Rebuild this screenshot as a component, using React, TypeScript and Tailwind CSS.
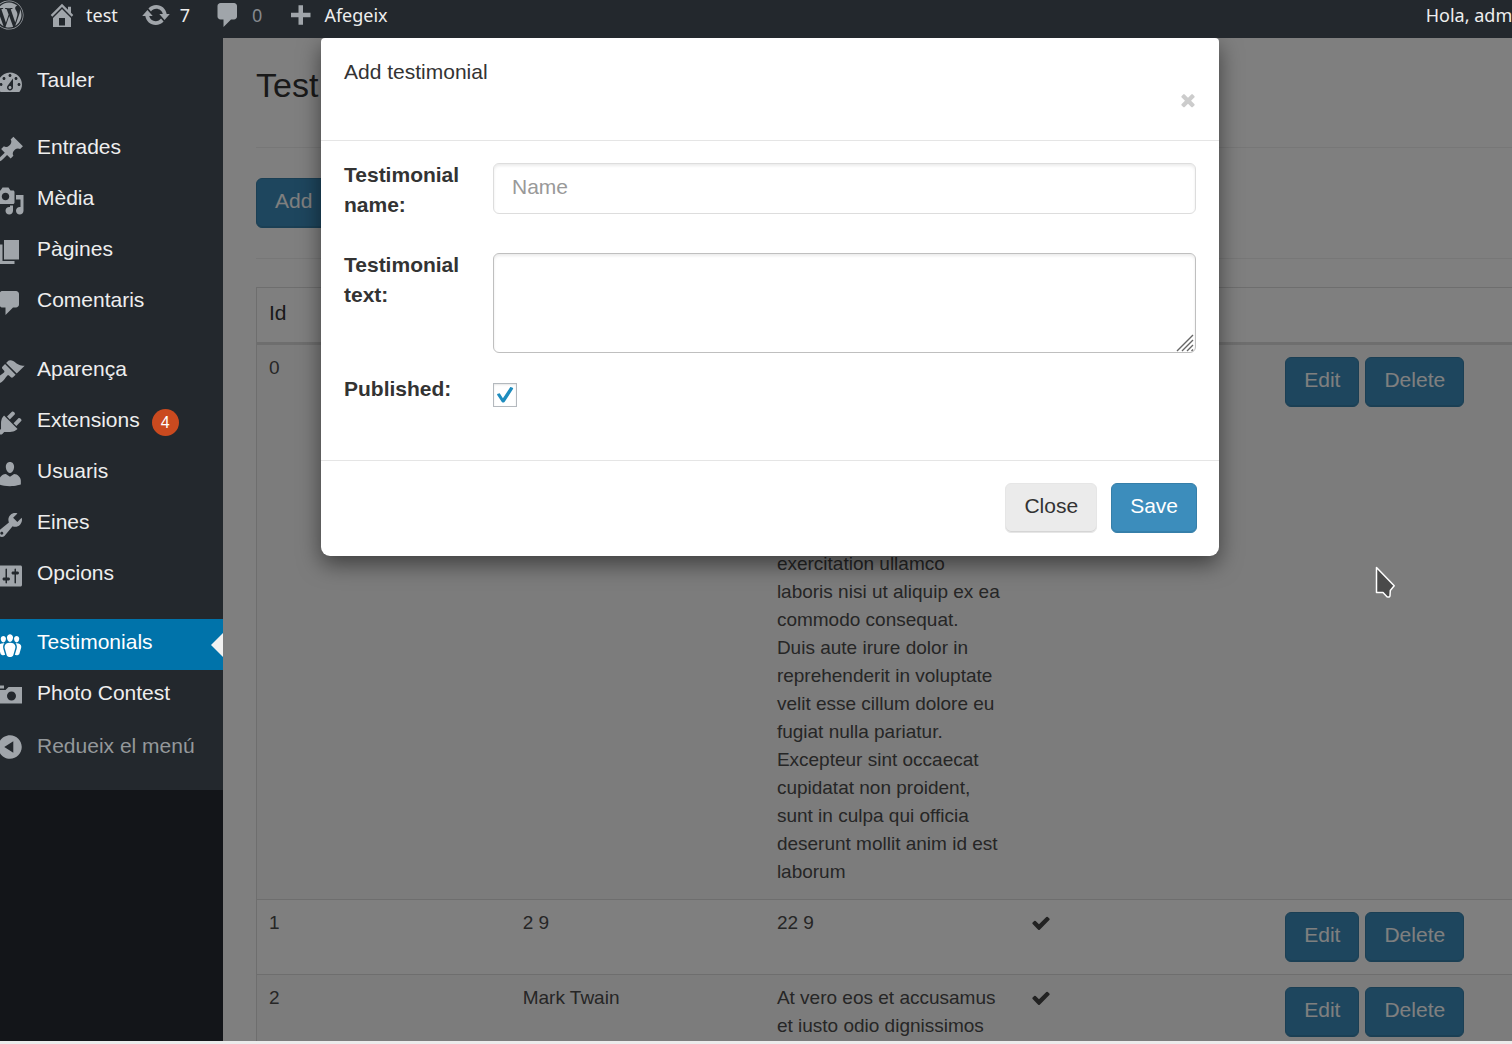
import { useState } from 'react'
import { FaWordpress } from 'react-icons/fa'
import clsx from 'clsx'

interface MenuEntry {
  label: string
  icon: string
  badge?: number
}

interface Testimonial {
  id: number
  name: string
  text: string
  published: boolean
}

// 20x20 admin glyphs
const icons = {
  home: 'M16 8.5l1.53 1.53-1.06 1.06L10 4.6l-6.47 6.49-1.06-1.06L10 2.5l4 4v-2h2v4zm-6-2.46l6 5.99V18H4v-5.97zM12 17v-5H8v5h4z',
  update:
    'M10.2 3.28c3.53 0 6.43 2.61 6.92 6h2.08l-3.5 4-3.5-4h2.32c-.45-1.97-2.21-3.45-4.32-3.45-1.45 0-2.73.71-3.54 1.78L4.95 5.66C6.23 4.2 8.11 3.28 10.2 3.28zm-.4 13.44c-3.52 0-6.43-2.61-6.92-6H.8l3.5-4c1.17 1.33 2.33 2.67 3.5 4H5.48c.45 1.97 2.21 3.45 4.32 3.45 1.45 0 2.73-.71 3.54-1.78l1.71 1.95c-1.28 1.46-3.15 2.38-5.25 2.38z',
  comments: 'M5 2h9c1.1 0 2 .9 2 2v7c0 1.1-.9 2-2 2h-2l-5 5v-5H5c-1.1 0-2-.9-2-2V4c0-1.1.9-2 2-2z',
  plus: 'M17 8.5v3h-5v5H9v-5H4v-3h5v-5h3v5h5z',
  dashboard:
    'M3.76 16h12.48c1.1-1.37 1.76-3.11 1.76-5 0-4.42-3.58-8-8-8s-8 3.58-8 8c0 1.89.66 3.63 1.76 5zM10 4c.55 0 1 .45 1 1s-.45 1-1 1-1-.45-1-1 .45-1 1-1zM6 6c.55 0 1 .45 1 1s-.45 1-1 1-1-.45-1-1 .45-1 1-1zm8 0c.55 0 1 .45 1 1s-.45 1-1 1-1-.45-1-1 .45-1 1-1zm-5.37 5.55L12 7v6c0 1.1-.9 2-2 2s-2-.9-2-2c0-.57.24-1.08.63-1.45zM4 10c.55 0 1 .45 1 1s-.45 1-1 1-1-.45-1-1 .45-1 1-1zm12 0c.55 0 1 .45 1 1s-.45 1-1 1-1-.45-1-1 .45-1 1-1zm-5 3c0-.55-.45-1-1-1s-1 .45-1 1 .45 1 1 1 1-.45 1-1z',
  post: 'M10.44 3.02l1.82-1.82 6.36 6.35-1.83 1.82c-1.05-.68-2.48-.57-3.41.36l-.75.75c-.92.93-1.04 2.35-.35 3.41l-1.83 1.82-2.41-2.41-2.8 2.79c-.42.42-3.38 2.71-3.8 2.29s1.86-3.39 2.28-3.81l2.79-2.79L4.1 9.36l1.83-1.82c1.05.69 2.48.57 3.4-.36l.75-.75c.93-.92 1.05-2.35.36-3.41z',
  media:
    'M13 11V4c0-.55-.45-1-1-1h-1.67L9 1H5L3.67 3H2c-.55 0-1 .45-1 1v7c0 .55.45 1 1 1h10c.55 0 1-.45 1-1zM7 4.5c1.38 0 2.5 1.12 2.5 2.5S8.38 9.5 7 9.5 4.5 8.38 4.5 7 5.62 4.5 7 4.5zM14 6h5v10.5c0 1.38-1.12 2.5-2.5 2.5S14 17.88 14 16.5s1.12-2.5 2.5-2.5c.17 0 .34.02.5.05V9h-3V6zm-4 8.05V13h2v3.5c0 1.38-1.12 2.5-2.5 2.5S7 17.88 7 16.5 8.12 14 9.5 14c.17 0 .34.02.5.05z',
  page: 'M6 15V2h10v13H6zm-1 1h8v2H3V5h2v11z',
  appearance:
    'M14.48 11.06L7.41 3.99l1.5-1.5c.5-.56 2.3-.47 3.51.32 1.21.8 1.43 1.28 2.91 2.1 1.18.64 2.45 1.26 4.45.85zm-.71.71L6.7 4.7 4.93 6.47c-.39.39-.39 1.02 0 1.41l1.06 1.06c.39.39.39 1.03 0 1.42-.6.6-1.43 1.11-2.21 1.69-.35.26-.7.53-1.01.84C1.43 14.23.4 16.08 1.4 17.07c.99 1 2.84-.03 4.18-1.36.31-.31.58-.66.85-1.02.57-.78 1.08-1.61 1.69-2.21.39-.39 1.02-.39 1.41 0l1.06 1.06c.39.39 1.02.39 1.41 0z',
  plugins:
    'M13.11 4.36L9.87 7.6 8 5.73l3.24-3.24c.35-.34 1.05-.2 1.56.32.52.51.66 1.21.31 1.55zm-8 1.77l.91-1.12 9.01 9.01-1.19.84c-.71.71-2.63 1.16-3.82 1.16H6.14L4.9 17.26c-.59.59-1.54.59-2.12 0-.59-.58-.59-1.53 0-2.12l1.24-1.24v-3.88c0-1.13.4-3.19 1.09-3.89zm7.26 3.97l3.24-3.24c.34-.35 1.04-.21 1.55.31.52.51.66 1.21.31 1.55l-3.24 3.25z',
  users:
    'M10 9.25c-2.27 0-2.73-3.44-2.73-3.44C7 4.02 7.82 2 9.97 2c2.16 0 2.98 2.02 2.71 3.81 0 0-.41 3.44-2.68 3.44zm0 2.57L12.72 10c2.39 0 4.52 2.33 4.52 4.53v2.49s-3.65 1.13-7.24 1.13c-3.65 0-7.24-1.13-7.24-1.13v-2.49c0-2.25 1.94-4.48 4.47-4.48z',
  tools:
    'M16.68 9.77c-1.34 1.34-3.3 1.67-4.95.99l-5.41 6.52c-.99.99-2.59.99-3.58 0s-.99-2.59 0-3.57l6.52-5.42c-.68-1.65-.35-3.61.99-4.95 1.28-1.28 3.12-1.62 4.72-1.06l-2.89 2.89 2.82 2.82 2.86-2.87c.53 1.58.18 3.39-1.08 4.65zM3.81 16.21c.4.39 1.04.39 1.43 0 .4-.4.4-1.04 0-1.43-.39-.4-1.03-.4-1.43 0-.39.39-.39 1.03 0 1.43z',
  settings:
    'M18 16V4c0-.55-.45-1-1-1H3c-.55 0-1 .45-1 1v12c0 .55.45 1 1 1h14c.55 0 1-.45 1-1zM8 11h1c.55 0 1 .45 1 1s-.45 1-1 1H8v1.5c0 .28-.22.5-.5.5s-.5-.22-.5-.5V13H6c-.55 0-1-.45-1-1s.45-1 1-1h1V5.5c0-.28.22-.5.5-.5s.5.22.5.5V11zm5-2h-1c-.55 0-1-.45-1-1s.45-1 1-1h1V5.5c0-.28.22-.5.5-.5s.5.22.5.5V7h1c.55 0 1 .45 1 1s-.45 1-1 1h-1v5.5c0 .28-.22.5-.5.5s-.5-.22-.5-.5V9z',
  groups:
    'M8.03 4.46c-.29 1.28.55 3.46 1.97 3.46 1.41 0 2.25-2.18 1.96-3.46-.22-.98-1.08-1.63-1.96-1.63-.89 0-1.74.65-1.97 1.63zm-4.13.9c-.25 1.08.47 2.93 1.67 2.93s1.92-1.85 1.67-2.93c-.19-.83-.92-1.39-1.67-1.39s-1.48.56-1.67 1.39zm8.86 0c-.25 1.08.47 2.93 1.66 2.93 1.2 0 1.92-1.85 1.67-2.93-.19-.83-.92-1.39-1.67-1.39-.74 0-1.47.56-1.66 1.39zm-.59 11.43l1.25-4.3C14.2 10 12.71 8.47 10 8.47c-2.72 0-4.21 1.53-3.44 4.02l1.26 4.3C8.05 17.51 9 18 10 18c.98 0 1.94-.49 2.17-1.21zm-6.1-7.63c-.49.67-.96 1.83-.42 3.59l1.12 3.79c-.34.2-.77.31-1.2.31-.85 0-1.65-.41-1.85-1.03l-1.07-3.65c-.65-2.11.61-3.4 2.92-3.4.27 0 .54.02.79.06-.1.1-.2.22-.29.33zm8.35-.39c2.31 0 3.58 1.29 2.92 3.4l-1.07 3.65c-.2.62-1 1.03-1.85 1.03-.43 0-.86-.11-1.2-.31l1.11-3.77c.55-1.78.08-2.94-.42-3.61-.08-.11-.18-.23-.28-.33.25-.04.51-.06.79-.06z',
  camera: 'M6 5V3H3v2h3zm12 10V4H9L7 6H2v9h16zm-7-8c1.66 0 3 1.34 3 3s-1.34 3-3 3-3-1.34-3-3 1.34-3 3-3z',
  collapse:
    'M10 2.16c4.33 0 7.84 3.51 7.84 7.84s-3.51 7.84-7.84 7.84S2.16 14.33 2.16 10 5.67 2.16 10 2.16zm2.2 11.72V6.12L6.18 10z',
}

const CHECK =
  'M1671 566q0 40-28 68l-724 724-136 136q-28 28-68 28t-68-28l-136-136-362-362q-28-28-28-68t28-68l136-136q28-28 68-28t68 28l294 295 656-657q28-28 68-28t68 28l136 136q28 28 28 68z'
const TIMES =
  'M1490 1322q0 40-28 68l-136 136q-28 28-68 28t-68-28l-294-294-294 294q-28 28-68 28t-68-28l-136-136q-28-28-28-68t28-68l294-294-294-294q-28-28-28-68t28-68l136-136q28-28 68-28t68 28l294 294 294-294q28-28 68-28t68 28l136 136q28 28 28 68t-28 68l-294 294 294 294q28 28 28 68z'

const menuGroups: MenuEntry[][] = [
  [{ label: 'Tauler', icon: icons.dashboard }],
  [
    { label: 'Entrades', icon: icons.post },
    { label: 'Mèdia', icon: icons.media },
    { label: 'Pàgines', icon: icons.page },
    { label: 'Comentaris', icon: icons.comments },
  ],
  [
    { label: 'Aparença', icon: icons.appearance },
    { label: 'Extensions', icon: icons.plugins, badge: 4 },
    { label: 'Usuaris', icon: icons.users },
    { label: 'Eines', icon: icons.tools },
    { label: 'Opcions', icon: icons.settings },
  ],
  [
    { label: 'Testimonials', icon: icons.groups },
    { label: 'Photo Contest', icon: icons.camera },
  ],
]

const testimonials: Testimonial[] = [
  {
    id: 0,
    name: 'Lorem',
    text: 'Lorem ipsum dolor sit amet, consectetur adipiscing elit, sed do eiusmod tempor incididunt ut labore et dolore magna aliqua. Ut enim ad minim veniam, quis nostrud exercitation ullamco laboris nisi ut aliquip ex ea commodo consequat. Duis aute irure dolor in reprehenderit in voluptate velit esse cillum dolore eu fugiat nulla pariatur. Excepteur sint occaecat cupidatat non proident, sunt in culpa qui officia deserunt mollit anim id est laborum',
    published: true,
  },
  { id: 1, name: '2 9', text: '22 9', published: true },
  { id: 2, name: 'Mark Twain', text: 'At vero eos et accusamus et iusto odio dignissimos', published: true },
]

export default function App() {
  return (
    <div className="flex h-screen flex-col overflow-hidden border-b-[3px] border-[#ebebeb] bg-white font-['Liberation_Sans',Arial,sans-serif] text-[21px]">
      <AdminBar />
      <div className="relative flex min-h-0 flex-1 overflow-hidden">
        <Sidebar />
        <main className="relative min-w-0 flex-1 overflow-hidden bg-white pl-[33px]">
          <TestimonialsPage />
          <div className="absolute inset-0 bg-black/50" />
        </main>
        {/* Dialog layer */}
        <div className="pointer-events-none absolute inset-y-0 left-0 -right-7 flex items-start justify-center">
          <AddTestimonialDialog />
        </div>
      </div>
      <svg className="absolute top-[563px] left-[1372px] h-[38px] w-7" viewBox="0 0 28 38" aria-hidden="true">
        <path
          d="M4.500 4.500v25H11l4 4.200q2.800 1 3-1l.3-5.200 3.900-4.800z"
          fill="#4a4a4a"
          stroke="#fff"
          strokeWidth="1.500"
          strokeLinejoin="round"
        />
      </svg>
    </div>
  )
}

function Glyph({ path }: { path: string }) {
  return (
    <svg viewBox="0 0 20 20" className="size-[30px] shrink-0 fill-current" fillRule="evenodd" aria-hidden="true">
      <path d={path} />
    </svg>
  )
}

function AdminBar() {
  return (
    <header className="h-[38px] shrink-0 overflow-hidden bg-[#23282d] font-['Noto_Sans',sans-serif] text-lg leading-[30px] text-[#eee]">
      <div className="-mr-4 -ml-[6px] flex justify-between">
        <nav className="flex gap-[23px] whitespace-nowrap">
          <a href="#about" aria-label="WordPress" className="text-[#a0a5aa]">
            <FaWordpress className="size-[30px]" />
          </a>
          <AdminBarLink href="#site" icon={icons.home} label="test" />
          <AdminBarLink href="#updates" icon={icons.update} label="7" />
          <AdminBarLink href="#comments" icon={icons.comments} label="0" muted />
          <AdminBarLink href="#new" icon={icons.plus} label="Afegeix" />
        </nav>
        <a href="#profile">Hola, admin</a>
      </div>
    </header>
  )
}

function AdminBarLink({ href, icon, label, muted }: { href: string; icon: string; label: string; muted?: boolean }) {
  return (
    <a href={href} className="flex gap-[9px]">
      <span className="text-[#a0a5aa]">
        <Glyph path={icon} />
      </span>
      <span className={clsx(muted && 'text-[#85898d]')}>{label}</span>
    </a>
  )
}

function Sidebar() {
  const [current, setCurrent] = useState('Testimonials')

  return (
    <aside className="w-[223px] shrink-0 overflow-hidden bg-[#131519]">
      <nav className="-ml-[5px] bg-[#23282d] pt-[19px] pb-[18px] text-[#eee]">
        {menuGroups.map((group, i) => (
          <ul key={i} className={clsx(i === 0 && 'mb-4', (i === 1 || i === 2) && 'mb-[18px]')}>
            {group.map((entry) => {
              const active = entry.label === current
              return (
                <li key={entry.label}>
                  <a
                    href="#menu"
                    onClick={() => setCurrent(entry.label)}
                    className={clsx(
                      'relative flex h-[51px] items-center gap-3',
                      active ? 'bg-[#0073aa] text-white' : 'hover:text-[#00b9eb]'
                    )}
                  >
                    <span className={active ? 'text-white' : 'text-[#a0a5aa]'}>
                      <Glyph path={entry.icon} />
                    </span>
                    <span className="pb-[5px]">{entry.label}</span>
                    {entry.badge && (
                      <span className="flex size-[27px] items-center justify-center rounded-full bg-[#ca4a1f] text-base text-white">
                        {entry.badge}
                      </span>
                    )}
                    {active && (
                      <svg viewBox="0 0 12 24" className="absolute right-0 h-6 w-3 fill-[#f1f1f1]" aria-hidden="true">
                        <path d="M12 0v24L0 12z" />
                      </svg>
                    )}
                  </a>
                </li>
              )
            })}
          </ul>
        ))}
        <button type="button" className="flex h-[51px] items-center gap-3 text-[#94989b]">
          <span className="text-[#a0a5aa]">
            <Glyph path={icons.collapse} />
          </span>
          <span className="pb-[2px]">Redueix el menú</span>
        </button>
      </nav>
    </aside>
  )
}

function PrimaryButton({ label }: { label: string }) {
  return (
    <button
      type="button"
      className="h-[50px] rounded-md border border-[#367fa9] bg-[#3c8dbc] px-[18px] pb-1 whitespace-nowrap text-white shadow-[inset_0_-1px_0_rgba(0,0,0,0.09)]"
    >
      {label}
    </button>
  )
}

function TestimonialsPage() {
  return (
    <div className="-mr-4 pt-[27px] text-[#333]">
      <h1 className="text-[34px] leading-10">Test</h1>
      <hr className="mt-[42px] mb-[30px] border-[#eee]" />
      <PrimaryButton label="Add" />
      <hr className="mt-[30px] mb-7 border-[#eee]" />
      <table className="w-full table-fixed border-collapse border border-[#ddd] text-left">
        <thead>
          <tr className="border-b-[3px] border-[#ddd]">
            <th className="h-14 px-3 pb-1 font-normal">Id</th>
            <th className="px-3 pb-1 font-normal">Name</th>
            <th className="px-3 pb-1 font-normal">Text</th>
            <th className="px-3 pb-1 font-normal">Published</th>
            <th />
          </tr>
        </thead>
        <tbody>
          {testimonials.map((item) => (
            <TestimonialRow key={item.id} item={item} />
          ))}
        </tbody>
      </table>
    </div>
  )
}

function TestimonialRow({ item }: { item: Testimonial }) {
  return (
    <tr className="border-b border-[#ddd] align-top text-[19px] leading-7 text-[#4c4c4c] odd:bg-[#f9f9f9]">
      <td className="px-3 pt-[9px] pb-[13px]">{item.id}</td>
      <td className="px-3 pt-[9px] pb-[13px]">{item.name}</td>
      <td className="pt-[9px] pr-[18px] pb-[13px] pl-3">{item.text}</td>
      <td className="px-3 pt-[9px] pb-[13px]">
        {item.published && (
          <svg viewBox="0 0 1792 1792" className="mt-1 size-5 fill-[#444]" role="img" aria-label="Published">
            <path d={CHECK} />
          </svg>
        )}
      </td>
      <td className="px-3 py-3">
        <div className="flex gap-[6px] text-[21px]">
          <PrimaryButton label="Edit" />
          <PrimaryButton label="Delete" />
        </div>
      </td>
    </tr>
  )
}

function AddTestimonialDialog() {
  const [published, setPublished] = useState(true)

  return (
    <form
      role="dialog"
      aria-labelledby="dialog-title"
      className="pointer-events-auto w-full max-w-[898px] rounded-t rounded-b-[9px] bg-white text-[#333] shadow-[0_8px_22px_rgba(0,0,0,0.5)]"
    >
      <div className="flex h-[103px] items-start justify-between border-b border-[#e5e5e5] px-[23px] pt-[19px]">
        <h2 id="dialog-title" className="leading-[30px]">
          Add testimonial
        </h2>
        <button type="button" aria-label="Close dialog" className="-mr-[2px] mt-[33px]">
          <svg viewBox="0 0 1792 1792" className="size-5 fill-[#ccc]" aria-hidden="true">
            <path d={TIMES} />
          </svg>
        </button>
      </div>

      <div className="px-[23px] pt-[19px] pb-[53px]">
        <div className="mb-[30px] grid grid-cols-[149px_1fr] items-start">
          <label htmlFor="name" className="pr-5 leading-[30px] font-bold">
            Testimonial name:
          </label>
          <input
            id="name"
            type="text"
            placeholder="Name"
            className="mt-[3px] h-[51px] w-full rounded-md border border-[#ddd] px-[18px] pb-1 shadow-[inset_0_2px_3px_rgba(0,0,0,0.08)] outline-none placeholder:text-[#999]"
          />
        </div>
        <div className="mb-[21px] grid grid-cols-[149px_1fr] items-start">
          <label htmlFor="text" className="pr-5 leading-[30px] font-bold">
            Testimonial text:
          </label>
          <div className="relative mt-[3px]">
            <textarea
              id="text"
              className="block h-[100px] w-full resize-none rounded-md border border-[#bfbfbf] px-[18px] py-2 shadow-[inset_0_2px_3px_rgba(0,0,0,0.08)] outline-none"
            />
            <svg
              viewBox="0 0 18 18"
              className="absolute right-[2px] bottom-px size-[18px] stroke-[#666]"
              strokeWidth="1.400"
              aria-hidden="true"
            >
              <path d="M1 17L17 1M6 17L17 6M11 17l6-6M15.500 17l1.500-1.500" />
            </svg>
          </div>
        </div>
        <div className="grid grid-cols-[149px_1fr] items-start">
          <label htmlFor="published" className="leading-[30px] font-bold">
            Published:
          </label>
          <div className="relative mt-[9px] size-6">
            <input
              id="published"
              type="checkbox"
              checked={published}
              onChange={(e) => setPublished(e.target.checked)}
              className="peer block size-6 appearance-none border border-[#b4b9be] bg-white shadow-[inset_0_1px_2px_rgba(0,0,0,0.1)]"
            />
            <svg
              viewBox="0 0 24 24"
              className="pointer-events-none absolute inset-0 hidden size-6 fill-[#1e8cbe] peer-checked:block"
              aria-hidden="true"
            >
              <path d="M4.200 12c-.3-.6 0-1 .6-1.200l1.200-.4c.5-.2.900 0 1.200.5l2.700 4.300 7.100-10.600c.3-.5.8-.6 1.300-.4l1.300.6c.6.3.7.8.4 1.300l-8.100 12.500c-.4.6-.8.800-1.300.8h-.8c-.6 0-1-.2-1.300-.8z" />
            </svg>
          </div>
        </div>
      </div>

      <div className="flex justify-end gap-[14px] border-t border-[#e5e5e5] px-[22px] pt-[22px] pb-[23px]">
        <button
          type="button"
          className="h-[50px] rounded-md border border-[#e6e6e6] bg-[#ebebeb] px-[18px] pb-1 shadow-[inset_0_-1px_0_rgba(0,0,0,0.09)]"
        >
          Close
        </button>
        <PrimaryButton label="Save" />
      </div>
    </form>
  )
}
